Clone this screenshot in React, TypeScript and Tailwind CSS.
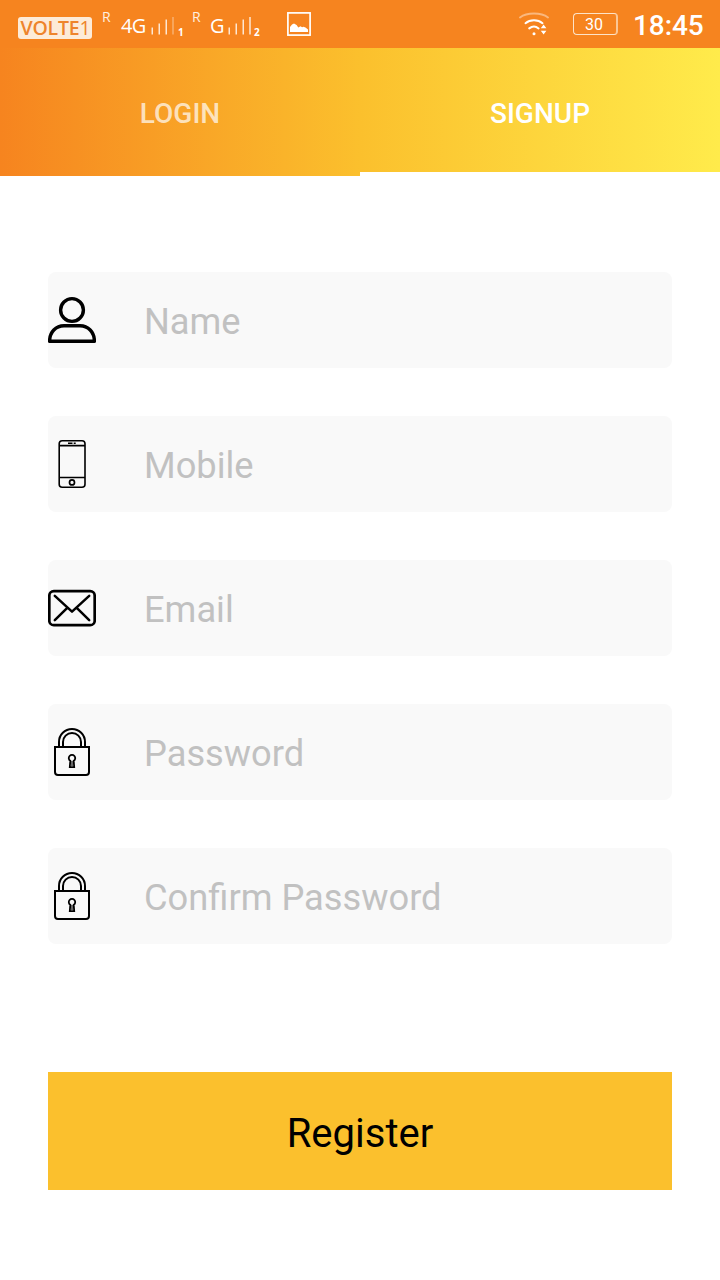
import React, { useState } from "react";
import { clsx } from "clsx";

const UserIcon = () => (
  <svg width="48" height="48" viewBox="0 0 48 48" fill="none" stroke="#000" strokeWidth="3.4">
    <circle cx="24" cy="14" r="11.4" />
    <path d="M1.6 45.2C1.6 36 8 29.8 16 29.8h16c8 0 14.4 6.2 14.4 15.4z" strokeLinejoin="round" />
  </svg>
);

const PhoneIcon = () => (
  <svg width="48" height="48" viewBox="0 0 48 48" fill="none" stroke="#000" strokeWidth="1.6">
    <rect x="11.2" y="0.8" width="25.8" height="46.4" rx="3" />
    <path d="M11 5.6h26M11 37.5h26" />
    <path d="M20 3.3h4.5M25.7 3.3h2" />
    <circle cx="24" cy="42.4" r="2.5" strokeWidth="1.7" />
  </svg>
);

const MailIcon = () => (
  <svg
    width="48"
    height="48"
    viewBox="0 0 48 48"
    fill="none"
    stroke="#000"
    strokeWidth="2.5"
    strokeLinecap="round"
    strokeLinejoin="round"
  >
    <rect x="1.3" y="7.2" width="45.4" height="34" rx="4.5" strokeWidth="2.7" />
    <path d="M6.8 11.8L24 27.6l17.2-15.8M6.8 36.2L19 24.2M41.2 36.2L29 24.2" />
  </svg>
);

const LockIcon = () => (
  <svg width="48" height="48" viewBox="0 0 48 48" fill="none" stroke="#000" strokeWidth="2">
    <path d="M7 19h34v25a3 3 0 0 1-3 3H10a3 3 0 0 1-3-3z" />
    <path d="M11 19v-5a13 13 0 0 1 26 0v5M15 19v-5a9 9 0 0 1 18 0v5" strokeWidth="2" />
    <path d="M22.3 32.8a3.2 3.2 0 1 1 3.4 0l.5 6.4h-4.4z" strokeWidth="1.8" />
    <path d="M24 33v5" stroke="#444" strokeWidth="1.6" />
  </svg>
);

const SignalBars = ({ weak }: { weak?: boolean }) => (
  <svg className="shrink-0" width="24" height="18" viewBox="0 0 24 18" fill="#fff">
    <rect x="0.6" y="10.5" width="1.2" height="7" />
    <rect x="7.6" y="6.5" width="1.2" height="11" />
    <rect x="14.6" y="2.5" width="1.2" height="15" />
    <rect x="21.4" y="-0.5" width="1.2" height="18" opacity={weak ? 0.45 : 1} />
  </svg>
);

const PictureIcon = () => (
  <svg className="shrink-0" width="24" height="24" viewBox="0 0 24 24">
    <rect x="0.9" y="0.9" width="22.2" height="22.2" fill="none" stroke="#fff" strokeWidth="1.7" />
    <path d="M3 20v-5l2-2.6 2-1 2.6 1.7 1.7 2.4 2.2-1.2 1.6 1 1.4-.5 2 .8 2.5 2V20z" fill="#fff" />
  </svg>
);

const WifiIcon = () => (
  <svg
    className="shrink-0"
    width="32"
    height="24"
    viewBox="0 0 32 24"
    fill="none"
    stroke="#fff"
    strokeLinecap="round"
  >
    <path d="M2 5.5C9 .2 23 .2 30 5.5" strokeWidth="2" opacity="0.42" />
    <path d="M7.5 11.2c4.5-3.8 12.5-3.8 17 0" strokeWidth="2" />
    <path d="M11.2 16.4c3-2.4 6.6-2.4 9.4 0" strokeWidth="2" />
    <circle cx="16" cy="21.8" r="1.5" fill="#fff" stroke="none" />
    <path d="M22.8 16.2l2.8-3.8 2.8 3.8zM22.8 18.8l2.8 3.8 2.8-3.8z" fill="#fff" stroke="none" />
  </svg>
);

const StatusBar = () => (
  <div className="flex h-12 items-start bg-[#f6841f] pl-[18px] font-['Open_Sans',sans-serif] text-white">
    <div className="mt-[17px] flex h-[22px] w-[74px] shrink-0 items-center justify-center rounded-[3px] bg-[#fdebd8] pl-px text-[19.5px] leading-[22px] font-semibold tracking-[-0.2px] text-[#ee842c]">
      VOLTE<span className="font-medium">1</span>
    </div>
    <span className="mt-[10px] ml-[10px] w-[19px] text-[14px] leading-[14px] text-[#fff0e0]">R</span>
    <span className="mt-4 w-[30px] text-[20px] leading-5 font-medium tracking-[-0.6px]">4G</span>
    <div className="mt-[17px]">
      <SignalBars weak />
    </div>
    <span className="mt-[27px] ml-[3px] w-[14px] text-[10px] leading-[10px] font-bold">1</span>
    <span className="mt-[10px] w-[18px] text-[14px] leading-[14px] text-[#fff0e0]">R</span>
    <span className="mt-4 w-[18px] text-[20px] leading-5 font-medium">G</span>
    <div className="mt-[17px]">
      <SignalBars />
    </div>
    <span className="mt-[27px] ml-[2px] w-[33px] text-[10px] leading-[10px] font-bold">2</span>
    <div className="mt-3">
      <PictureIcon />
    </div>
    <div className="mt-3 ml-auto">
      <WifiIcon />
    </div>
    <div className="mt-[13px] ml-[23px] flex h-[22px] w-[45px] shrink-0 items-center justify-center rounded-[4px] border border-r-2 border-[#fde3c8] border-r-[#fbc795] pt-px pr-[2px] font-[Roboto,sans-serif] text-[16px] leading-5">
      30
    </div>
    <span className="mt-[10px] mr-[15px] ml-[15px] w-[72px] font-[Roboto,sans-serif] text-[28px] leading-8 font-medium tracking-[-0.1px] whitespace-nowrap">
      18:45
    </span>
  </div>
);

const tabs = ["LOGIN", "SIGNUP"];

const fields = [
  { label: "Name", type: "text", icon: UserIcon },
  { label: "Mobile", type: "tel", icon: PhoneIcon },
  { label: "Email", type: "email", icon: MailIcon },
  { label: "Password", type: "password", icon: LockIcon },
  { label: "Confirm Password", type: "password", icon: LockIcon },
];

export default function App() {
  const [active, setActive] = useState("SIGNUP");

  return (
    <div className="flex h-[1280px] w-[720px] flex-col bg-white font-[Roboto,sans-serif]">
      <StatusBar />
      <nav className="grid h-32 grid-cols-2 bg-linear-to-r/srgb from-[#f6841f] via-[#fbc02d] to-[#ffeb4b]">
        {tabs.map((tab) => (
          <button
            key={tab}
            onClick={() => setActive(tab)}
            className={clsx(
              "border-b-4 pt-2 text-[28px] font-medium",
              active === tab ? "border-white text-white" : "border-transparent text-white/70",
            )}
          >
            {tab}
          </button>
        ))}
      </nav>
      <form className="flex flex-col gap-12 px-12 pt-24" onSubmit={(e) => e.preventDefault()}>
        {fields.map(({ label, type, icon: Icon }) => (
          <label key={label} className="flex h-24 items-center gap-12 rounded-lg bg-[#f9f9f9]">
            <Icon />
            <input
              type={type}
              placeholder={label}
              className="h-full min-w-0 flex-1 pt-0.5 text-[36.25px] outline-none placeholder:text-[#c1c1c1]"
            />
          </label>
        ))}
        <button className="mt-20 h-[118px] bg-[#fbc02d] pt-1.5 text-[40px] text-black">Register</button>
      </form>
    </div>
  );
}
